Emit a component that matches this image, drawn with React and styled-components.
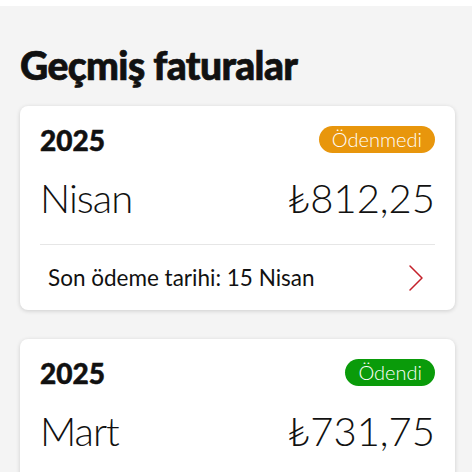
import styled, { createGlobalStyle } from "styled-components";

const GlobalStyle = createGlobalStyle`
  * { box-sizing: border-box; }
  body {
    margin: 0;
    background: #fff;
    font-family: Lato, "Noto Sans", "DejaVu Sans", sans-serif;
    color: #111;
  }
`;

const bills = [
  {
    year: 2025,
    month: "Nisan",
    amount: "₺812,25",
    status: "Ödenmedi",
    paid: false,
    due: "Son ödeme tarihi: 15 Nisan",
  },
  {
    year: 2025,
    month: "Mart",
    amount: "₺731,75",
    status: "Ödendi",
    paid: true,
    due: "Ödeme tarihi: 14 Mart",
  },
];

const Chevron = () => (
  <svg width="18" height="28" viewBox="0 0 18 28" fill="none">
    <path d="M3 2 L15 14 L3 26" stroke="#c4212b" strokeWidth="1.5" strokeLinecap="round" strokeLinejoin="round" />
  </svg>
);

const BillCard = ({ year, month, amount, status, paid, due }) => (
  <Card>
    <TopRow>
      <Year>{year}</Year>
      <Badge paid={paid}>{status}</Badge>
    </TopRow>
    <AmountRow>
      <Month>{month}</Month>
      <Amount>{amount}</Amount>
    </AmountRow>
    <Footer>
      <DueText>{due}</DueText>
      <Chevron />
    </Footer>
  </Card>
);

export default function App() {
  return (
    <>
      <GlobalStyle />
      <Panel>
        <Title>Geçmiş faturalar</Title>
        <List>
          {bills.map((b, i) => (
            <BillCard key={i} {...b} />
          ))}
        </List>
      </Panel>
    </>
  );
}

const Panel = styled.div`
  margin-top: 6px;
  width: 472px;
  height: 466px;
  overflow: hidden;
  background: #f4f4f4;
  padding: 37px 17px 0 20px;
`;

const Title = styled.h1`
  margin: 0 0 19px;
  font-size: 39px;
  font-weight: 900;
  line-height: 44px;
  letter-spacing: -0.6px;
  -webkit-text-stroke: 0.7px #111;
`;

const List = styled.div`
  display: flex;
  flex-direction: column;
  gap: 29px;
`;

const Card = styled.div`
  background: #fff;
  border-radius: 8px;
  box-shadow: 0 1px 4px rgba(0, 0, 0, 0.16);
  padding: 20px 20px 0;
`;

const TopRow = styled.div`
  display: flex;
  justify-content: space-between;
  align-items: center;
  height: 27px;
`;

const Year = styled.div`
  font-size: 28px;
  font-weight: 900;
  -webkit-text-stroke: 0.5px #111;
`;

const Badge = styled.div`
  background: ${(p) => (p.paid ? "#0a9b0a" : "#e8960c")};
  color: #fff;
  font-size: 20px;
  font-weight: 300;
  height: 27px;
  line-height: 27px;
  padding: 0 13px;
  border-radius: 14px;
`;

const AmountRow = styled.div`
  display: flex;
  justify-content: space-between;
  align-items: baseline;
  margin-top: 21px;
  padding-bottom: 22px;
  border-bottom: 1px solid #e6e6e6;
  font-size: 40px;
  font-weight: 300;
  line-height: 48px;
`;

const Month = styled.div`
  letter-spacing: -1px;
`;

const Amount = styled.div``;

const Footer = styled.div`
  display: flex;
  justify-content: space-between;
  align-items: center;
  height: 65px;
  padding: 0 10px 0 8px;
`;

const DueText = styled.span`
  font-size: 22.5px;
  font-weight: 400;
`;
